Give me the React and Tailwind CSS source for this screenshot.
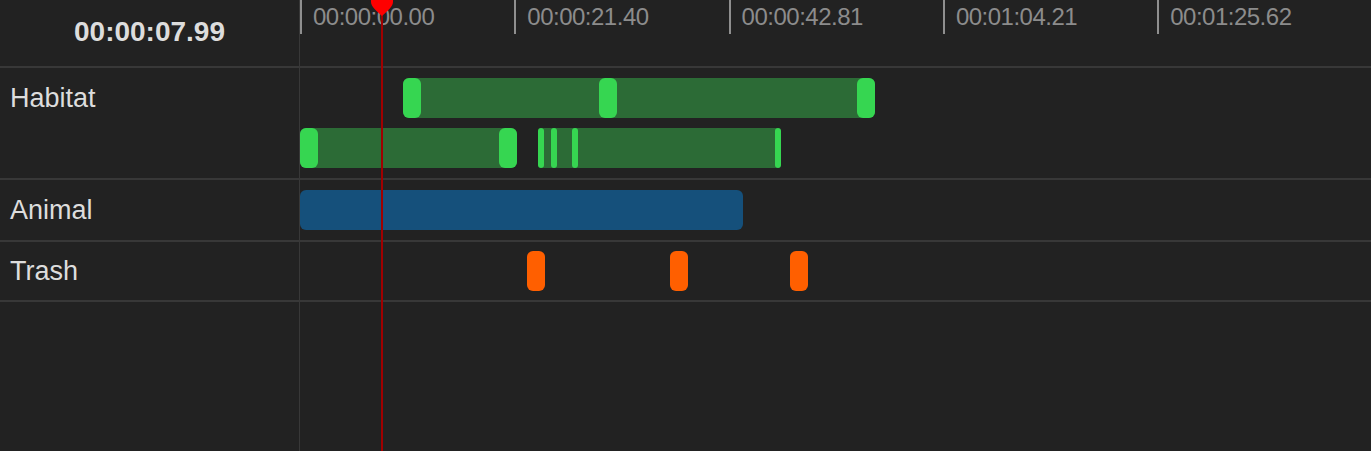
const TICKS = ['00:00:00.00', '00:00:21.40', '00:00:42.81', '00:01:04.21', '00:01:25.62']

const HANDLE = 'absolute top-0 h-[40px] rounded-md bg-[#36d651]'

function Label({ children }) {
  return (
    <div className="w-[300px] shrink-0 border-r border-[#383838]">
      <div className="h-[60px] flex items-center pl-[10px] text-[27px] text-[#dddddd]">{children}</div>
    </div>
  )
}

export default function App() {
  return (
    <div className="relative h-[451px] w-[1371px] overflow-hidden bg-[#222222] flex flex-col" style={{ fontFamily: '"Liberation Sans", Arial, sans-serif' }}>
      {/* header */}
      <div className="flex h-[68px] border-b-2 border-[#383838]">
        <div className="w-[300px] shrink-0 border-r border-[#383838] flex items-center justify-center pb-[2px] text-[28px] font-bold text-[#dddddd]">
          00:00:07.99
        </div>
        <div className="flex">
          {TICKS.map(t => (
            <div key={t} className="w-[214.3px] shrink-0">
              <div className="h-[34px] border-l-2 border-[#8f8f8f] pl-[11px] flex items-center pb-[1px] text-[24px] tracking-[-0.5px] text-[#8c8c8c]">
                {t}
              </div>
            </div>
          ))}
        </div>
      </div>

      {/* Habitat */}
      <div className="flex h-[112px] border-b-2 border-[#383838]">
        <Label>Habitat</Label>
        <div className="flex-1 flex flex-col gap-[10px] pt-[10px]">
          <div className="relative h-[40px]">
            <div className="absolute left-[103px] top-0 h-[40px] w-[472px] rounded-md bg-[#2c6b36]">
              <div className={`${HANDLE} left-0 w-[18px]`} />
              <div className={`${HANDLE} left-[196px] w-[18px]`} />
              <div className={`${HANDLE} left-[454px] w-[18px]`} />
            </div>
          </div>
          <div className="relative h-[40px]">
            <div className="absolute left-0 top-0 h-[40px] w-[217px] rounded-md bg-[#2c6b36]">
              <div className={`${HANDLE} left-0 w-[18px]`} />
              <div className={`${HANDLE} left-[199px] w-[18px]`} />
            </div>
            <div className="absolute left-[238px] top-0 h-[40px] w-[243px] rounded-md bg-[#2c6b36]">
              <div className={`${HANDLE} left-0 w-[6px]`} />
              <div className={`${HANDLE} left-[13px] w-[6px]`} />
              <div className={`${HANDLE} left-[34px] w-[6px]`} />
              <div className={`${HANDLE} left-[237px] w-[6px]`} />
            </div>
          </div>
        </div>
      </div>

      {/* Animal */}
      <div className="flex h-[62px] border-b-2 border-[#383838]">
        <Label>Animal</Label>
        <div className="relative flex-1">
          <div className="absolute left-0 top-[10px] h-[40px] w-[443px] rounded-md bg-[#15507b]" />
        </div>
      </div>

      {/* Trash */}
      <div className="flex h-[60px] border-b-2 border-[#383838]">
        <div className="w-[300px] shrink-0 border-r border-[#383838]">
          <div className="h-[58px] flex items-center pl-[10px] text-[27px] text-[#dddddd]">Trash</div>
        </div>
        <div className="relative flex-1">
          {[227, 370, 490].map(x => (
            <div key={x} className="absolute top-[9px] h-[40px] w-[18px] rounded-md bg-[#ff5f00]" style={{ left: x }} />
          ))}
        </div>
      </div>

      {/* filler */}
      <div className="flex flex-1">
        <div className="w-[300px] shrink-0 border-r border-[#383838]" />
      </div>

      {/* playhead */}
      <div className="absolute left-[381px] top-0 bottom-0 w-[2px] bg-[#a00000]" />
      <svg className="absolute left-[371px] top-0" width="22" height="16" viewBox="0 0 22 16">
        <path d="M0 0 H22 V2 C22 7 16 11 11 16 C6 11 0 7 0 2 Z" fill="#ff0000" />
      </svg>
    </div>
  )
}
